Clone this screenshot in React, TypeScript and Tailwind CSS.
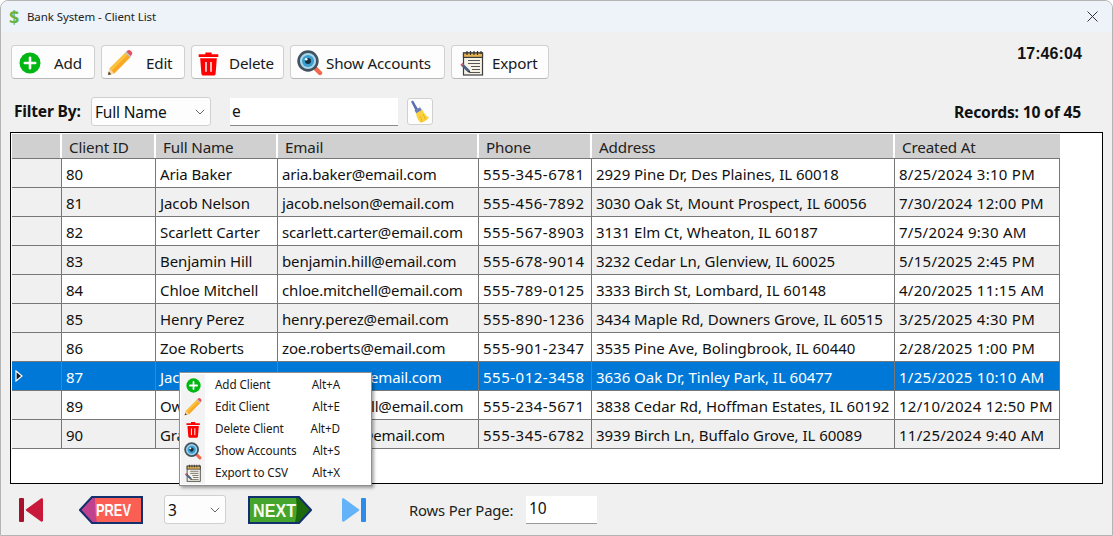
import React from "react";

const F = { fontFamily: '"Noto Sans", sans-serif' };

function AddIcon({ s = 22 }: { s?: number }) {
  return (
    <svg width={s} height={s} viewBox="0 0 22 22">
      <circle cx="11" cy="11" r="10.5" fill="#00b612" />
      <path d="M11 5.8v10.4M5.8 11h10.4" stroke="#fff" strokeWidth="2.6" strokeLinecap="round" />
    </svg>
  );
}
function PencilIcon({ s = 26 }: { s?: number }) {
  return (
    <svg width={s} height={s} viewBox="0 0 26 26">
      <path d="M1 25l1.6-6.4L18.6 2.4l4.8 4.8L7.4 23.4z" fill="#f9a825" />
      <path d="M2.6 18.6L18.6 2.4l2.2 2.2L4.8 20.8z" fill="#fdc13a" />
      <path d="M19 2l1.6-1.4c1-.8 2-.8 3 .2l1 1c.9 1 .9 2 .1 3L23.4 6.6z" fill="#e8505b" />
      <path d="M18.2 2.8l1.2-1.2 4.8 4.8-1.2 1.2z" fill="#b9c2c8" />
      <path d="M2.6 18.6L7.4 23.4 1 25z" fill="#f6d8a8" />
      <path d="M1.7 21.6l2.6 2.6L1 25z" fill="#4a4038" />
    </svg>
  );
}
function TrashIcon({ s = 24 }: { s?: number }) {
  return (
    <svg width={s * 0.84} height={s} viewBox="0 0 20 24">
      <path d="M7 1.5h6V3.2h6.4v2.6H.6V3.2H7z" fill="#f00" />
      <path d="M2 7h16l-1.2 15a1.8 1.8 0 0 1-1.8 1.6H5A1.8 1.8 0 0 1 3.2 22z" fill="#f00" />
      <path d="M7.6 10.5v9.5M12.4 10.5v9.5" stroke="#fff" strokeWidth="1.4" />
    </svg>
  );
}
function LensIcon({ s = 26 }: { s?: number }) {
  return (
    <svg width={s} height={s} viewBox="0 0 26 26">
      <path d="M17 17l6 6" stroke="#f0694f" strokeWidth="4.4" strokeLinecap="round" />
      <circle cx="11" cy="11" r="9.4" fill="#a9d6ea" stroke="#41535f" strokeWidth="2.6" />
      <circle cx="11" cy="11" r="6" fill="#3c9ed0" />
      <circle cx="11" cy="11" r="3" fill="#16303f" />
      <circle cx="9.2" cy="9.2" r="1.3" fill="#fff" />
    </svg>
  );
}
function NoteIcon({ s = 26 }: { s?: number }) {
  return (
    <svg width={s} height={s} viewBox="0 0 26 26">
      <rect x="4.5" y="3" width="19" height="22" fill="#f6f3e6" stroke="#3c3c3c" strokeWidth="1.2" />
      <rect x="4.5" y="3" width="19" height="4.4" fill="#e6b552" stroke="#3c3c3c" strokeWidth="1.2" />
      <path d="M8 1v4M11.500 1v4M15 1v4M18.500 1v4M22 1v3" stroke="#333" strokeWidth="1.200" />
      <path d="M9 10.500h12M9 13.500h12M12 16.500h9M13 19.500h8M11 22.500h10" stroke="#555" strokeWidth="1.100" />
      <path d="M1.500 15l2-2 7 7-2 2z" fill="#4b5f85" />
      <path d="M8.500 22l2-2 1 3z" fill="#222" />
      <path d="M1.500 15l2-2 1.300 1.300-2 2z" fill="#d65c6a" />
    </svg>
  );
}
function BroomIcon() {
  return (
    <svg width="20" height="24" viewBox="0 0 20 24">
      <path d="M1 1.500l2-1 5 8.500-2.500 1.400z" fill="#5b6fb0" />
      <path d="M4.500 10.500l5.500-3.200 2 3-5.600 3.300z" fill="#6f7fb8" />
      <path d="M6 13.500l6.400-3.700c1.600 3.400 3.600 6 6.600 8-2.300 2.800-5 4.200-8.400 5-2.400-2.300-4-5.500-4.600-9.300z" fill="#fbd13e" />
      <path d="M13 14l2.500 5.500M10 16l2.500 6" stroke="#e8b423" strokeWidth="1" />
    </svg>
  );
}
function Chevron() {
  return (
    <svg width="10" height="6" viewBox="0 0 10 6" className="shrink-0">
      <path d="M.8.8L5 5 9.200.8" fill="none" stroke="#666" strokeWidth="1" />
    </svg>
  );
}

function ToolButton({ w, icon, label, gap, pl }: { w: string; icon: React.ReactNode; label: string; gap: string; pl: string }) {
  return (
    <div className={`${w} ${gap} ${pl} h-[34px] pt-[2px] flex items-center bg-[#fdfdfd] border border-[#d0d0d0] border-b-[#b8b8b8] rounded-[4px] text-[15.2px] text-[#1a1a1a]`}>
      {icon}
      <span className="tracking-[-0.2px]">{label}</span>
    </div>
  );
}

const cols = ["w-[50px]", "w-[94px]", "w-[122px]", "w-[201px]", "w-[113px]", "w-[303px]", "w-[165px]"];
const track = ["tracking-[-0.15px]", "tracking-[-0.1px]", "tracking-[-0.15px]", "tracking-[0.5px]", "tracking-[-0.03px]", "tracking-[0.27px]"];
const headers = ["", "Client ID", "Full Name", "Email", "Phone", "Address", "Created At"];
const rows = [
  ["80", "Aria Baker", "aria.baker@email.com", "555-345-6781", "2929 Pine Dr, Des Plaines, IL 60018", "8/25/2024 3:10 PM"],
  ["81", "Jacob Nelson", "jacob.nelson@email.com", "555-456-7892", "3030 Oak St, Mount Prospect, IL 60056", "7/30/2024 12:00 PM"],
  ["82", "Scarlett Carter", "scarlett.carter@email.com", "555-567-8903", "3131 Elm Ct, Wheaton, IL 60187", "7/5/2024 9:30 AM"],
  ["83", "Benjamin Hill", "benjamin.hill@email.com", "555-678-9014", "3232 Cedar Ln, Glenview, IL 60025", "5/15/2025 2:45 PM"],
  ["84", "Chloe Mitchell", "chloe.mitchell@email.com", "555-789-0125", "3333 Birch St, Lombard, IL 60148", "4/20/2025 11:15 AM"],
  ["85", "Henry Perez", "henry.perez@email.com", "555-890-1236", "3434 Maple Rd, Downers Grove, IL 60515", "3/25/2025 4:30 PM"],
  ["86", "Zoe Roberts", "zoe.roberts@email.com", "555-901-2347", "3535 Pine Ave, Bolingbrook, IL 60440", "2/28/2025 1:00 PM"],
  ["87", "Jack Turner", "jack.turner@email.com", "555-012-3458", "3636 Oak Dr, Tinley Park, IL 60477", "1/25/2025 10:10 AM"],
  ["89", "Owen Mitchell", "owen.mitchell@email.com", "555-234-5671", "3838 Cedar Rd, Hoffman Estates, IL 60192", "12/10/2024 12:50 PM"],
  ["90", "Grace Davis", "grace.davis@email.com", "555-345-6782", "3939 Birch Ln, Buffalo Grove, IL 60089", "11/25/2024 9:40 AM"],
];

const menu: [React.ReactNode, string, string][] = [
  [<AddIcon s={15} />, "Add Client", "Alt+A"],
  [<PencilIcon s={18} />, "Edit Client", "Alt+E"],
  [<TrashIcon s={17} />, "Delete Client", "Alt+D"],
  [<LensIcon s={18} />, "Show Accounts", "Alt+S"],
  [<NoteIcon s={18} />, "Export to CSV", "Alt+X"],
];

export default function App() {
  return (
    <div style={F} className="w-[1113px] h-[536px] bg-[#f0f0f0] border border-[#b4b4b4] rounded-t-[8px] overflow-hidden flex flex-col text-[#111]">
      <div className="h-[31px] bg-[#eef3f9] flex items-center justify-between pl-[8px] pr-[14px] shrink-0">
        <div className="flex items-center gap-[7px]">
          <span className="text-[18px] font-bold text-[#6cb33f] leading-none w-[11px]">$</span>
          <span className="text-[11.5px] text-[#222] tracking-[-0.1px]">Bank System - Client List</span>
        </div>
        <svg width="11" height="11" viewBox="0 0 11 11">
          <path d="M.5.5l10 10M10.5.5l-10 10" stroke="#333" strokeWidth="1" />
        </svg>
      </div>

      <div className="flex justify-between pl-[10px] pr-[30px] mt-[13px] shrink-0">
        <div className="flex gap-[6px]">
          <ToolButton w="w-[84px]" pl="pl-[7px]" gap="gap-[13px]" icon={<AddIcon />} label="Add" />
          <ToolButton w="w-[84px]" pl="pl-[5px]" gap="gap-[13px]" icon={<PencilIcon />} label="Edit" />
          <ToolButton w="w-[93px]" pl="pl-[6px]" gap="gap-[10px]" icon={<TrashIcon s={25} />} label="Delete" />
          <ToolButton w="w-[155px]" pl="pl-[6px]" gap="gap-[3px]" icon={<LensIcon />} label="Show Accounts" />
          <ToolButton w="w-[98px]" pl="pl-[7px]" gap="gap-[7px]" icon={<NoteIcon />} label="Export" />
        </div>
        <span className="text-[16px] font-bold leading-none mt-[1px] tracking-[0.1px]" style={{ fontFamily: '"Liberation Sans", sans-serif' }}>17:46:04</span>
      </div>

      <div className="flex items-center pl-[13px] pr-[31px] mt-[18px] h-[29px] shrink-0">
        <span className="text-[15.6px] font-bold w-[77px] tracking-[-0.2px] pt-px whitespace-nowrap">Filter By:</span>
        <div className="w-[120px] h-[29px] pt-[3px] bg-[#fdfdfd] border border-[#d0d0d0] rounded-[3px] flex items-center justify-between pl-[3px] pr-[5px] text-[15.5px] tracking-[-0.2px]">
          Full Name
          <span className="-mt-[3px]"><Chevron /></span>
        </div>
        <div className="w-[168px] h-[28px] ml-[19px] pt-[2px] bg-white border-b border-[#8a8a8a] flex items-center pl-[2px] text-[15.5px]">e</div>
        <div className="w-[26px] h-[27px] ml-[9px] bg-[#fdfdfd] border border-[#d0d0d0] rounded-[3px] flex items-center justify-center">
          <BroomIcon />
        </div>
        <span className="ml-auto text-[15.7px] font-bold tracking-[-0.2px] pt-[3px]">Records: 10 of 45</span>
      </div>

      <div className="relative mx-[9px] mt-[6px] h-[352px] bg-white border border-black pl-px pt-px shrink-0">
        <div className="flex h-[25px] bg-[#d0d0d0] border-b border-[#777] w-[1048px] text-[15.2px] text-[#222]">
          {headers.map((h, i) => (
            <div key={i} className={`${cols[i]} ${i < 6 ? "border-r-2 border-white" : ""} pl-[7px] pt-[2px] flex items-center tracking-[-0.15px] shrink-0`}>{h}</div>
          ))}
        </div>
        {rows.map((r, ri) => {
          const sel = ri === 7;
          return (
            <div key={r[0]} className={`flex w-[1048px] h-[29px] border-b border-[#777] text-[15px] ${sel ? "bg-[#0078d7] text-white" : "bg-white"}`}>
              <div className={`${cols[0]} shrink-0 flex items-center pl-[3px] border-r border-[#777] ${sel ? "bg-[#0078d7]" : "bg-[#f0f0f0]"}`}>
                {sel && (
                  <svg width="8" height="12" viewBox="0 0 8 12">
                    <path d="M1 1l6 5-6 5z" fill="#123" stroke="#fff" strokeWidth="1.2" />
                  </svg>
                )}
              </div>
              {r.map((c, ci) => (
                <div key={ci} className={`${cols[ci + 1]} ${track[ci]} shrink-0 flex items-center pl-[4px] pt-[2px] whitespace-nowrap overflow-hidden border-r border-[#777] ${ri % 2 === 1 && !sel ? "bg-[#f0f0f0]" : ""}`}>{c}</div>
              ))}
            </div>
          );
        })}

        <div className="absolute left-[168px] top-[239px] w-[193px] h-[114px] bg-white border border-[#8f8f8f] shadow-[2px_2px_3px_rgba(0,0,0,0.35)] flex p-px z-10">
          <div className="w-[24px] bg-[#f3f3f3] flex flex-col shrink-0">
            {menu.map((m, i) => (
              <div key={i} className="h-[22px] flex items-center justify-center">{m[0]}</div>
            ))}
          </div>
          <div className="flex-1 flex flex-col text-[11.7px] text-[#1a1a1a] tracking-[-0.1px]">
            {menu.map((m, i) => (
              <div key={i} className="h-[22px] flex items-center justify-between pl-[10px] pr-[30px]">
                <span>{m[1]}</span>
                <span>{m[2]}</span>
              </div>
            ))}
          </div>
        </div>
      </div>

      <div className="flex items-center pl-[18px] mt-[11px] h-[29px] shrink-0">
        <svg width="24" height="24" viewBox="0 0 24 24">
          <rect x="0" y="0" width="5" height="24" rx="1" fill="#a8112c" />
          <path d="M24 1.500v21c0 1-1 1.500-2 1L7.500 13c-1-.7-1-1.300 0-2L22 .5c1-.5 2 0 2 1z" fill="#c8193a" />
        </svg>
        <svg width="64" height="28" viewBox="0 0 64 28" className="ml-[36px]">
          <path d="M13 1h50v26H13L1 14z" fill="#c0428f" stroke="#12306e" strokeWidth="2" />
          <path d="M16 2h46v24H18c-2-8-2-16-2-24z" fill="#fb5f53" />
          <text x="17" y="20" fill="#fff" fontFamily="'Liberation Sans', sans-serif" fontWeight="700" fontSize="17" textLength="35" lengthAdjust="spacingAndGlyphs">PREV</text>
        </svg>
        <div className="w-[62px] h-[29px] ml-[21px] pt-[2px] bg-[#fdfdfd] border border-[#d0d0d0] rounded-[3px] flex items-center justify-between pl-[3px] pr-[5px] text-[15.5px]">
          3
          <span className="-mt-[2px]"><Chevron /></span>
        </div>
        <svg width="64" height="28" viewBox="0 0 64 28" className="ml-[22px]">
          <path d="M1 1h50l12 13-12 13H1z" fill="#1d6a0c" stroke="#12306e" strokeWidth="2" />
          <path d="M2 2h46c1 8 1 16-1 24H2z" fill="#44a42c" />
          <text x="5" y="21" fill="#f4fbee" fontFamily="'Liberation Sans', sans-serif" fontWeight="700" fontSize="19" textLength="43" lengthAdjust="spacingAndGlyphs">NEXT</text>
        </svg>
        <svg width="24" height="24" viewBox="0 0 24 24" className="ml-[30px]">
          <path d="M0 1.500v21c0 1 1 1.500 2 1L16.500 13c1-.7 1-1.300 0-2L2 .5c-1-.5-2 0-2 1z" fill="#64b2f8" />
          <rect x="19" y="0" width="5" height="24" rx="1" fill="#2d8ceb" />
        </svg>
        <span className="ml-[43px] pt-px text-[14.8px] text-[#222] w-[117px] tracking-[-0.15px] whitespace-nowrap">Rows Per Page:</span>
        <div className="w-[71px] h-[28px] bg-white border-b border-[#9a9a9a] flex items-center pl-[3px] text-[15.5px]">10</div>
      </div>
    </div>
  );
}
